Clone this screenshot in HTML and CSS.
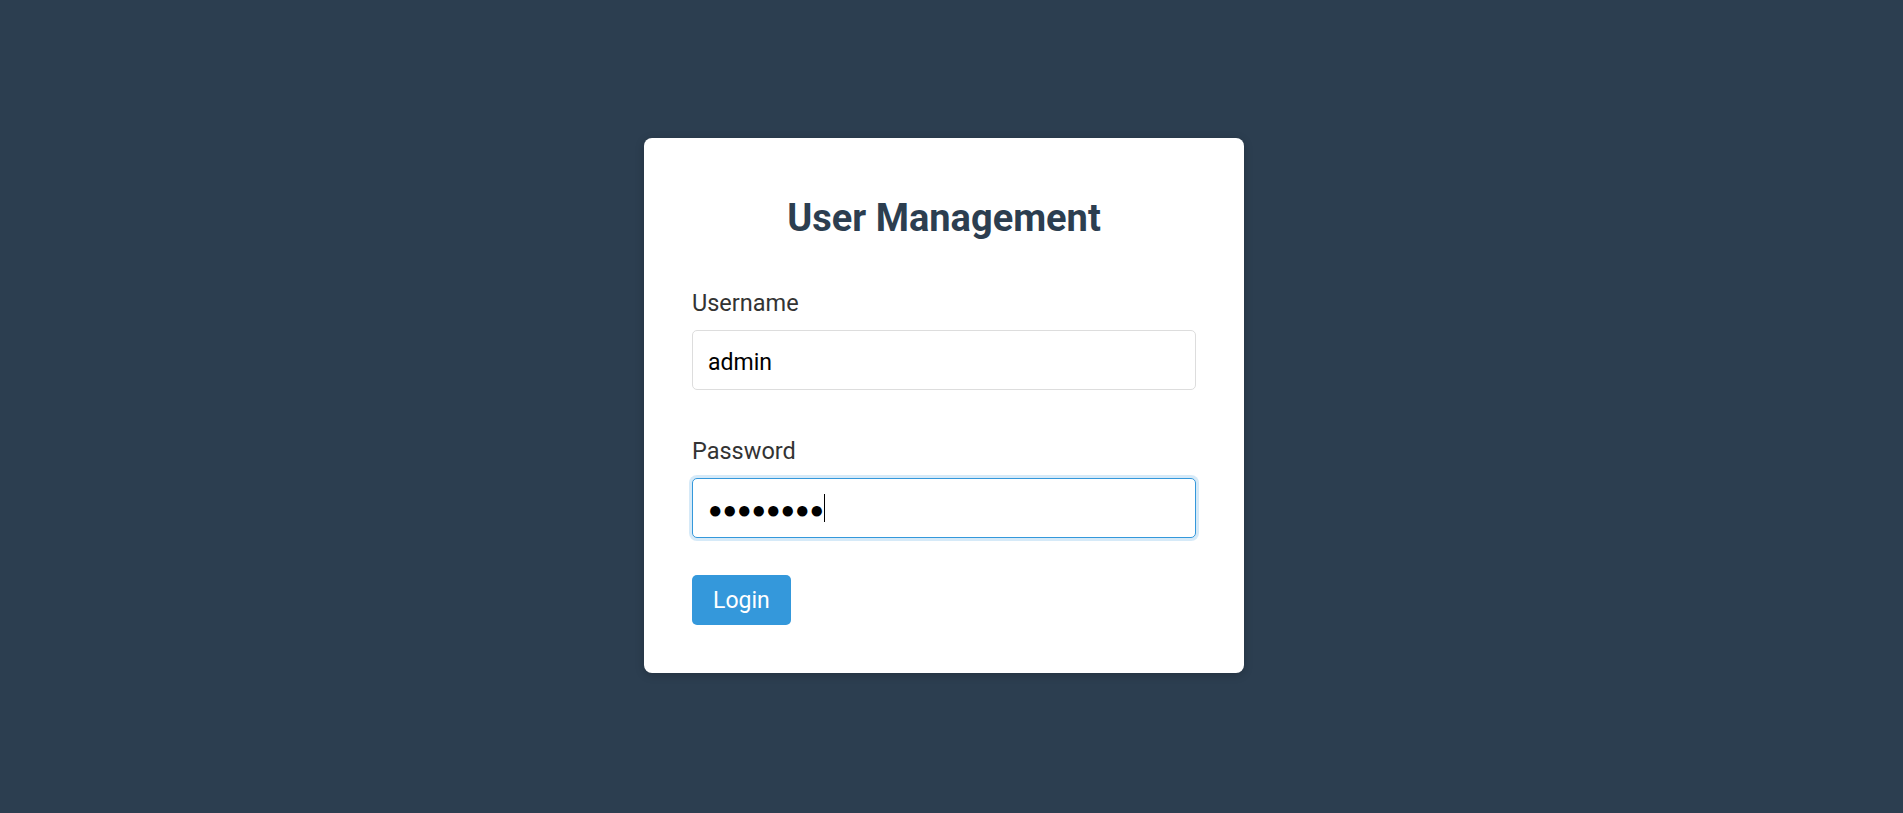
FILE: index.html
```html
<!DOCTYPE html>
<html lang="en">
<head>
<meta charset="utf-8">
<title>User Management - Login</title>
<link rel="stylesheet" href="styles.css">
</head>
<body class="page">
  <main class="login-card">
    <h1 class="login-title">User Management</h1>
    <form class="login-form" onsubmit="return false;">
      <div class="field">
        <label class="field-label" for="username">Username</label>
        <input class="field-input" id="username" type="text" value="admin">
      </div>
      <div class="field">
        <label class="field-label" for="password">Password</label>
        <div class="input-wrap">
          <input class="field-input field-input--secret is-active" id="password" type="text" value="●●●●●●●●" autofocus>
          <span class="fake-caret" aria-hidden="true"></span>
        </div>
      </div>
      <button class="login-button" type="submit">Login</button>
    </form>
  </main>
  <script src="script.js"></script>
</body>
</html>
```

FILE: styles.css
```css
html, body {
  margin: 0;
  padding: 0;
}

.page {
  background: #2c3e50;
  min-height: 100vh;
  box-sizing: border-box;
  display: flex;
  align-items: center;
  justify-content: center;
  padding: 0 15px 2px 0;
  font-family: Roboto, "Liberation Sans", sans-serif;
}

.login-card {
  width: 600px;
  box-sizing: border-box;
  padding: 48px;
  background: #ffffff;
  border-radius: 8px;
  box-shadow: 0 2px 10px rgba(0, 0, 0, 0.2);
}

.login-title {
  margin: 0 0 35px;
  font-size: 38px;
  line-height: 65px;
  font-weight: 700;
  color: #2c3e50;
  text-align: center;
}

.login-form {
  display: flex;
  flex-direction: column;
  align-items: flex-start;
}

.field {
  display: flex;
  flex-direction: column;
  align-self: stretch;
}

.field + .field {
  margin-top: 44px;
}

.field-label {
  font-size: 23.5px;
  line-height: 30px;
  padding-top: 2px;
  color: #333333;
  margin-bottom: 12px;
}

.input-wrap {
  position: relative;
}

.field-input {
  display: block;
  box-sizing: border-box;
  width: 100%;
  height: 60px;
  padding: 4px 15px 0;
  border: 1px solid #dddddd;
  border-radius: 5px;
  font-family: Roboto, "Liberation Sans", sans-serif;
  font-size: 23px;
  color: #000000;
  background: #ffffff;
  outline: none;
  caret-color: transparent;
}

.field-input--secret {
  font-size: 24px;
  letter-spacing: 0;
}

.field-input:focus,
.field-input.is-active {
  border-color: #3498db;
  box-shadow: 0 0 0 3px rgba(52, 152, 219, 0.2);
}

.fake-caret {
  position: absolute;
  left: 132px;
  top: 16px;
  width: 1px;
  height: 28px;
  background: #000000;
  pointer-events: none;
}

.login-button {
  margin-top: 37px;
  height: 50px;
  padding: 2px 21px 0;
  line-height: 48px;
  border: none;
  border-radius: 5px;
  background: #3498db;
  color: #ffffff;
  font-family: Roboto, "Liberation Sans", sans-serif;
  font-size: 23px;
  cursor: pointer;
}
```

FILE: script.js
```js
const pw = document.getElementById('password');
pw.focus();
pw.setSelectionRange(pw.value.length, pw.value.length);
```
